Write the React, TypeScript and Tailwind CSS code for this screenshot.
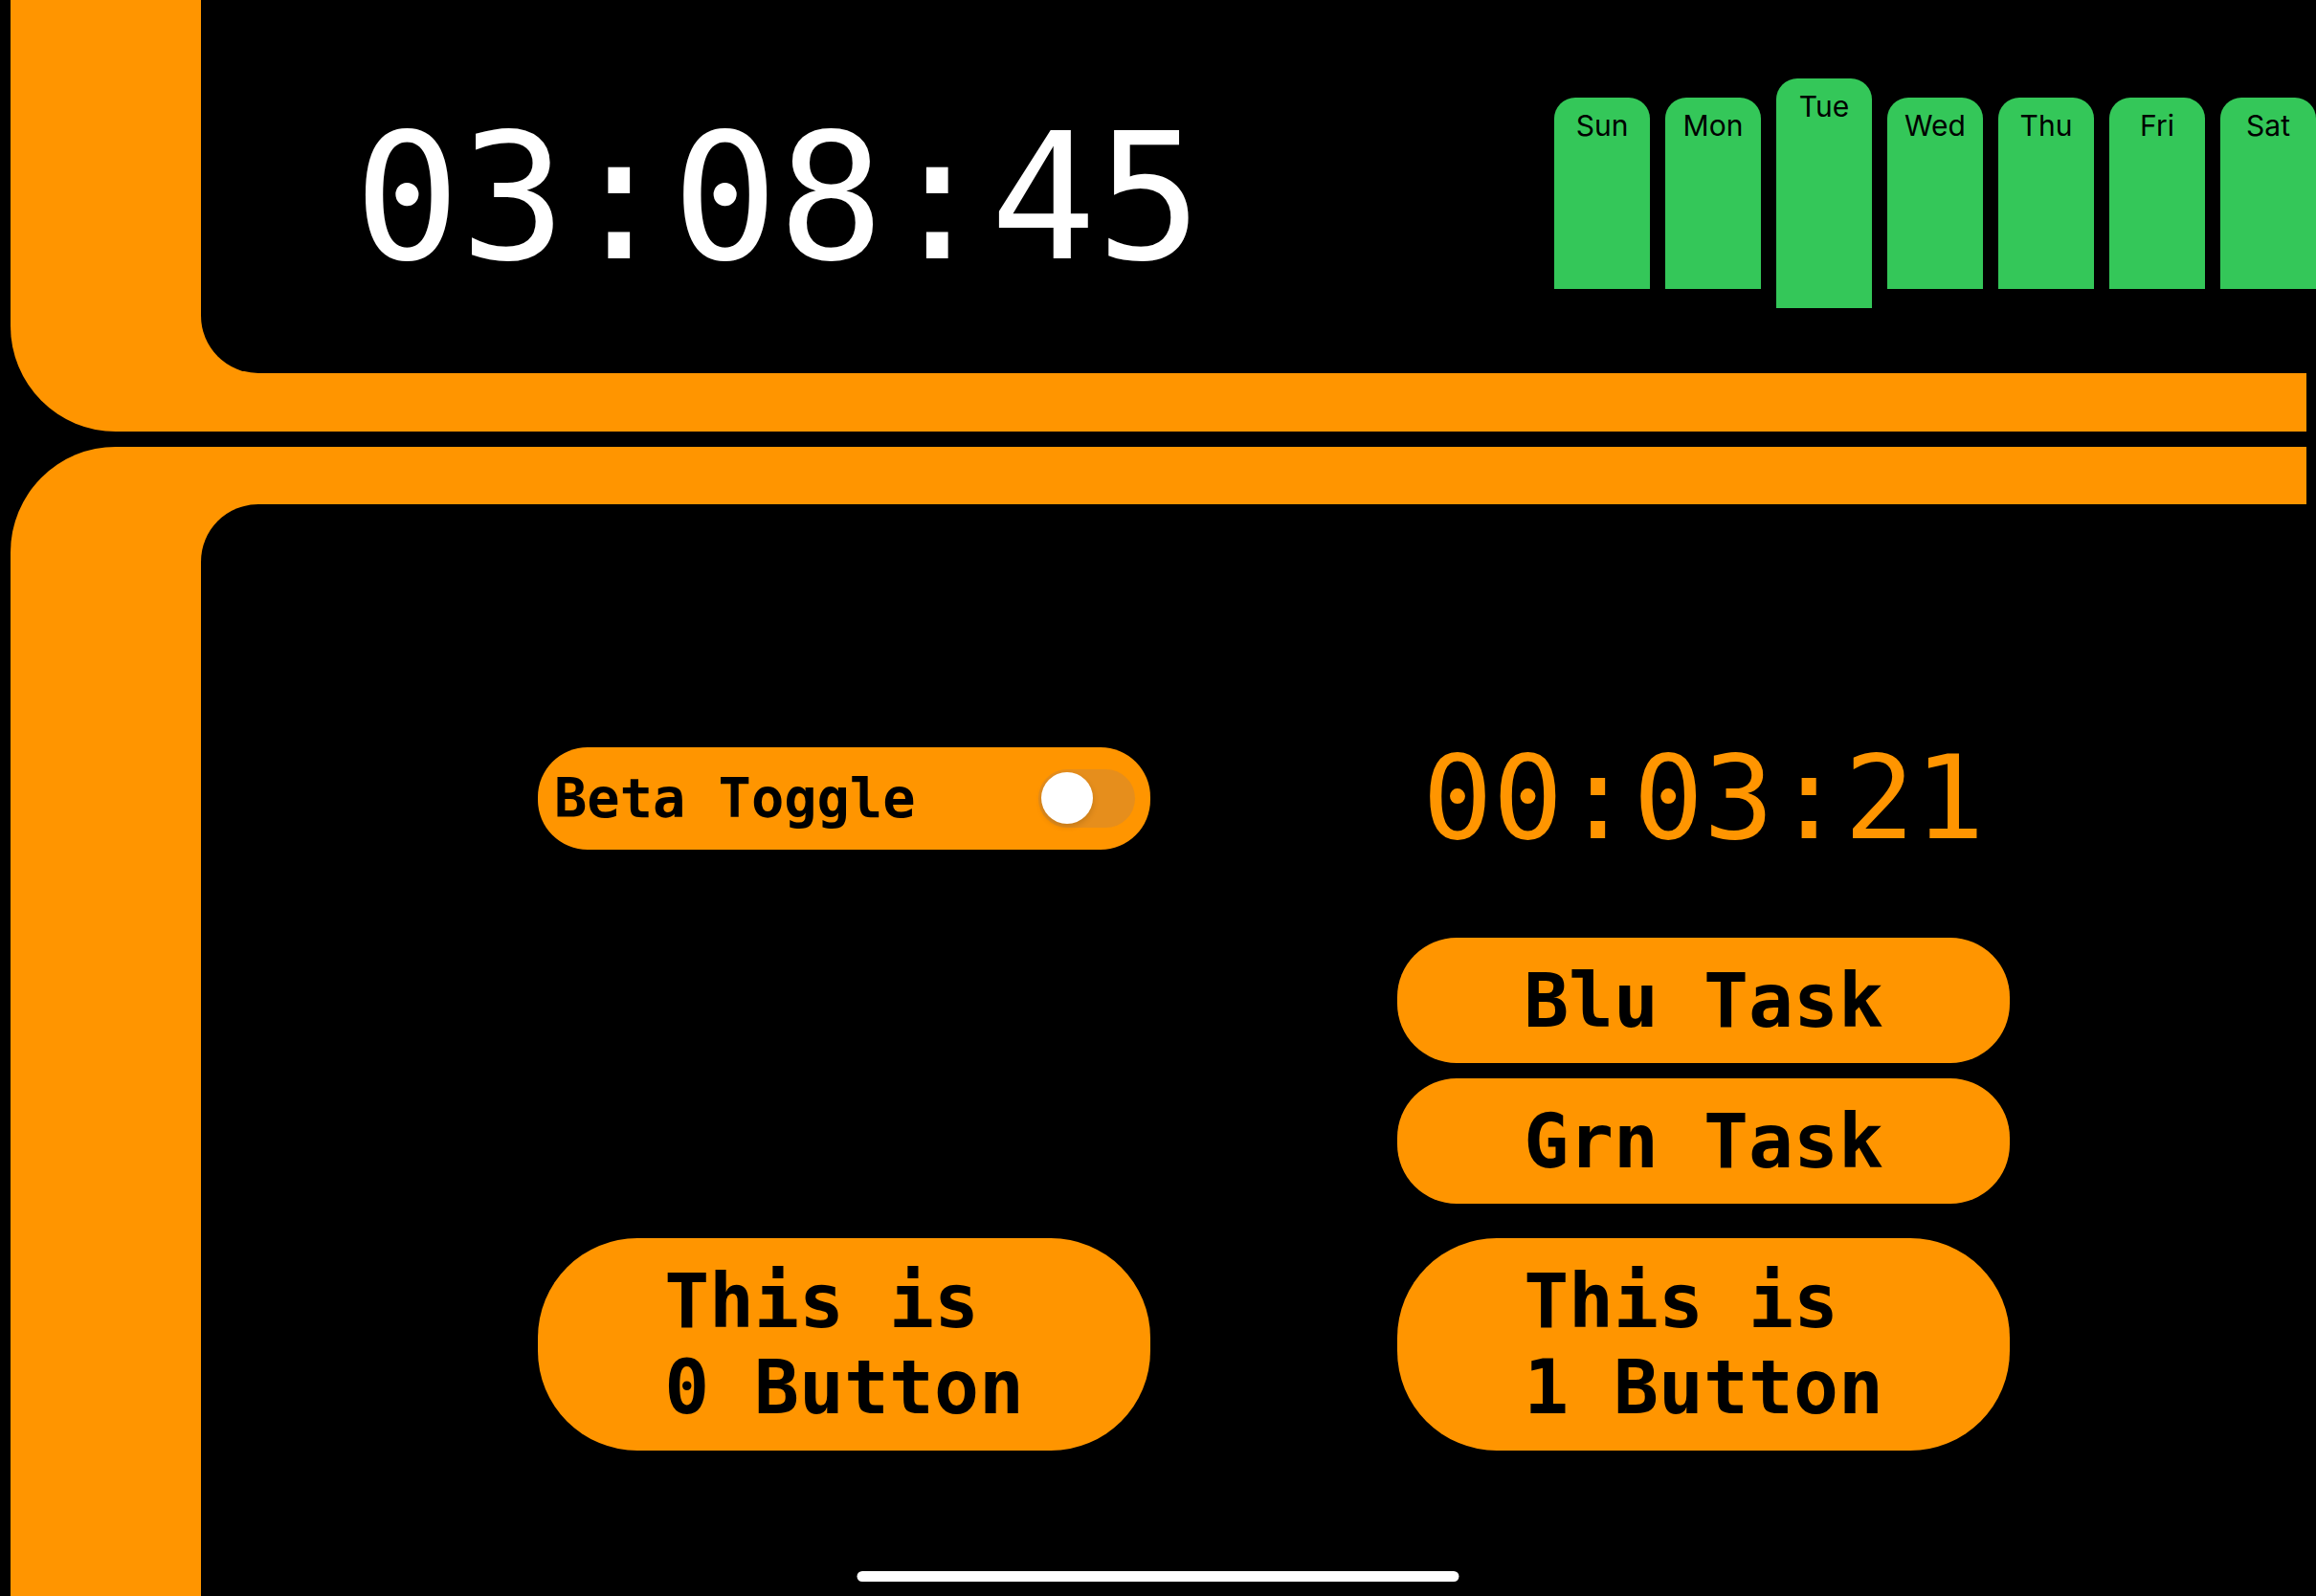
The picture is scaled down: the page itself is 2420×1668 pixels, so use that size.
import { useState } from "react";

interface DayTab {
  label: string;
  active?: boolean;
}

const DAYS: DayTab[] = [
  { label: "Sun" },
  { label: "Mon" },
  { label: "Tue", active: true },
  { label: "Wed" },
  { label: "Thu" },
  { label: "Fri" },
  { label: "Sat" },
];

// 모노 폰트 (slashed zero)
const mono = "font-['DejaVu_Sans_Mono',monospace] slashed-zero";

function PillButton({ label, tall }: { label: string; tall?: boolean }) {
  return (
    <button
      className={`w-[640px] bg-[#ff9500] text-black flex items-center justify-center ${
        tall ? "h-[222px] rounded-[104px]" : "h-[131px] rounded-[62px]"
      }`}
    >
      <span
        className={`${mono} font-bold text-[78px] leading-[90px] text-left whitespace-pre-line`}
      >
        {label}
      </span>
    </button>
  );
}

function App() {
  const [beta, setBeta] = useState(false);

  return (
    <div className="relative w-[2420px] h-[1668px] bg-black overflow-hidden pl-[11px]">
      {/* 상단 프레임 */}
      <div className="h-[451px] mr-[10px] bg-[#ff9500] rounded-bl-[110px] pl-[199px] pb-[61px]">
        <div className="h-full bg-black rounded-bl-[60px] flex items-start">
          <div
            className={`${mono} text-white text-[184px] leading-none mt-[114px] ml-[160px]`}
          >
            03:08:45
          </div>
          <div className="ml-auto -mr-[10px] mt-[82px] h-[240px] flex items-center gap-4">
            {DAYS.map((day) => (
              <div
                key={day.label}
                className={`w-[100px] bg-[#34c759] rounded-t-[22px] flex justify-center pt-[11px] ${
                  day.active ? "h-[240px]" : "h-[200px]"
                }`}
              >
                <span className="font-['Inter',sans-serif] text-[30px] leading-[36px] text-black">
                  {day.label}
                </span>
              </div>
            ))}
          </div>
        </div>
      </div>

      {/* 하단 프레임 */}
      <div className="h-[1201px] mt-[16px] mr-[10px] bg-[#ff9500] rounded-tl-[110px] pl-[199px] pt-[60px]">
        <div className="h-full bg-black rounded-tl-[60px] pt-[233px] pl-[352px] flex gap-[258px]">
          <div className="w-[640px] flex flex-col">
            <div className="h-[148px] flex items-center">
              <div className="w-[640px] h-[107px] rounded-[52px] bg-[#ff9500] flex items-center justify-between pl-[17px] pr-[16px]">
                <span className={`${mono} font-bold text-[57px] leading-none text-black`}>
                  Beta Toggle
                </span>
                <button
                  onClick={() => setBeta((b) => !b)}
                  className={`w-[101px] h-[61px] rounded-full flex items-center px-[3px] ${
                    beta ? "bg-[#34c759] justify-end" : "bg-[#e68e1c] justify-start"
                  }`}
                >
                  <span className="w-[54px] h-[54px] rounded-full bg-white shadow-[0_3px_6px_rgba(0,0,0,0.15)]" />
                </button>
              </div>
            </div>
            <div className="mt-[386px]">
              <PillButton label={"This is\n0 Button"} tall />
            </div>
          </div>

          <div className="w-[640px] flex flex-col">
            <div
              className={`${mono} h-[148px] text-[122px] leading-[148px] text-[#ff9500] text-center`}
            >
              00:03:21
            </div>
            <div className="mt-[72px] flex flex-col gap-4">
              <PillButton label="Blu Task" />
              <PillButton label="Grn Task" />
            </div>
            <div className="mt-[36px]">
              <PillButton label={"This is\n1 Button"} tall />
            </div>
          </div>
        </div>
      </div>

      <div className="absolute bottom-[15px] left-1/2 -translate-x-1/2 w-[629px] h-[11px] rounded-full bg-white" />
    </div>
  );
}

export default App;
